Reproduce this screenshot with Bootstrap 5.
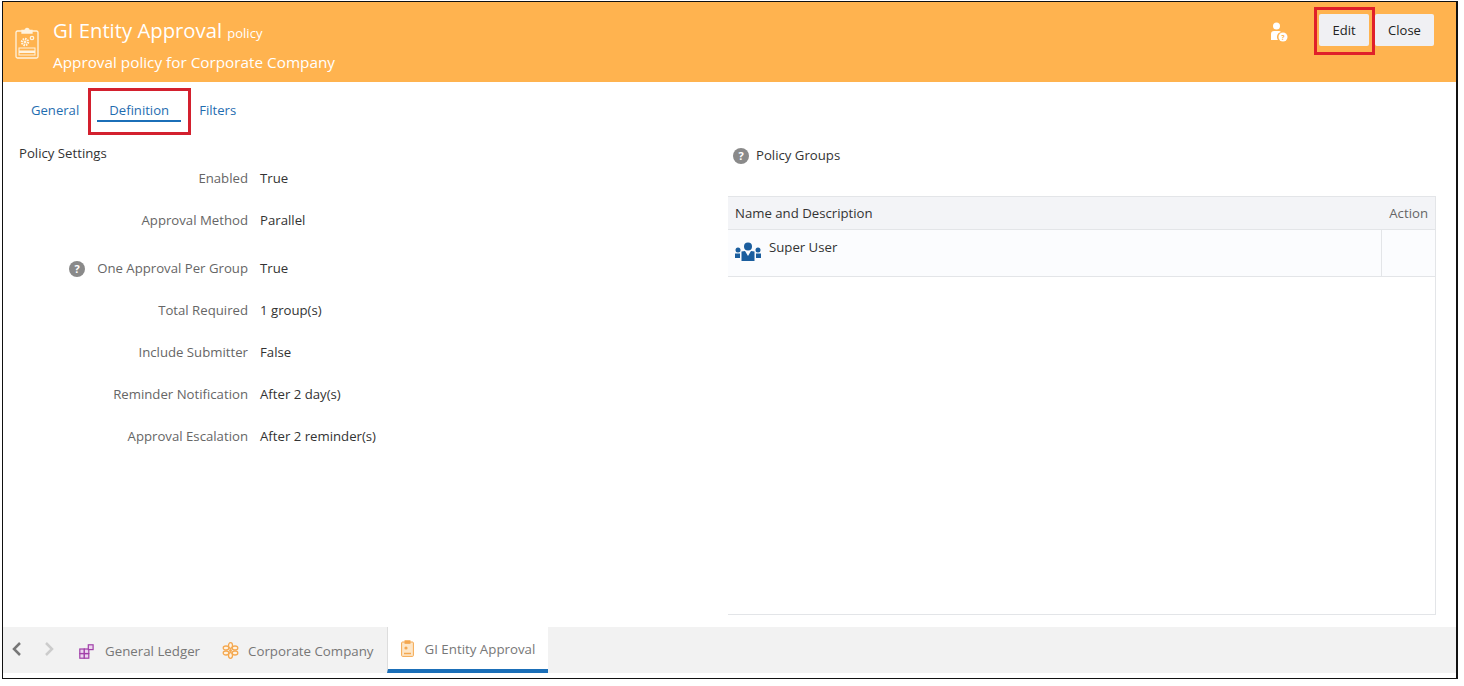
<!DOCTYPE html>
<html lang="en">
<head>
<meta charset="utf-8">
<title>GI Entity Approval policy</title>
<link href="https://cdn.jsdelivr.net/npm/bootstrap@5.3.0/dist/css/bootstrap.min.css" rel="stylesheet">
<style>
html,body{height:686px;overflow:hidden;background:#fff}
body{font-family:"Open Sans","Liberation Sans",sans-serif;font-size:13.2px;color:#333}
.frame{margin:1px 0 0 2px;width:1456px;height:678px;border:1px solid #111;border-right-width:2px}
.hdr{height:80px;background:#ffb34f;color:#fff;padding:0 22px 0 12px}
.hdr-ico{margin-top:24px;margin-right:14px}
.hdr-title{font-size:20.3px;line-height:26px;margin-top:15px}
.hdr-title small{font-size:13px}
.hdr-sub{font-size:15.3px;line-height:20px;margin-top:6px}
.hdr-btns{margin-top:12px}
.hdr-user{margin:8px 31px 0 0}
.btn-hdr{background:#f0f0f3;color:#222;font-size:13px;border:0;border-radius:2px;height:32px;padding:0;width:59px;line-height:32px}
.btn-edit{position:relative;width:50px;margin:0 6px 0 0}
.btn-edit::after{content:"";position:absolute;left:-5px;right:-6px;top:-7px;bottom:-9px;border:3px solid #e0202a}
.tabrow{height:54px;padding:0 0 0 28px}
.tab-lnk{color:#1f6db0;font-size:13.1px;text-decoration:none;line-height:20px;padding:18px 0 0;display:block}
.tab-on{position:relative;margin:0 18px;width:84px;text-align:center;height:40px;border-bottom:2px solid #1b6fb8;padding-top:18px}
.tab-on::after{content:"";position:absolute;left:-9px;right:-10px;top:6px;bottom:-15px;border:3px solid #d3202e}
.colset{height:491px}
.leftcol{width:725px;padding-left:16px}
.ph{line-height:20px;margin-top:7px;color:#333}
.frow{display:flex;align-items:baseline}
.flab{width:229px;text-align:right;color:#666;margin-right:12px;flex:none}
.fval{color:#333}
.r1{margin-top:6px}.r2{margin-top:22px}.r3{margin-top:28px}.r4{margin-top:23px}.r5{margin-top:22px}.r6{margin-top:22px}.r7{margin-top:22px}
.qm{display:inline-block;width:16px;height:16px;border-radius:50%;background:#8a8a8a;color:#fff;font-size:11px;font-weight:700;line-height:16px;text-align:center}
.qm-sp{margin-right:12px}
.qm-pg{margin-right:7px}
.rightcol{width:708px}
.pg{line-height:20px;margin:9px 0 0 5px}
.gridbox{margin-top:31px;height:419px;border:1px solid #e3e5e8;border-left:0;background:#fff}
.ghead{height:33px;background:#f3f4f7;border-bottom:1px solid #e3e5e8;line-height:33px;padding:0 7px;color:#333}
.ghead span+span{color:#666}
.grow{height:47px;background:#fbfcfe;border-bottom:1px solid #e3e5e8}
.gname{padding:8px 0 0 7px}
.gact{width:54px;border-left:1px solid #e3e5e8}
.botbar{height:46px;background:#f2f2f2;padding-left:8px}
.arrow{width:32px;padding-top:12px}
.navit{color:#777;line-height:49px;padding:0;font-size:13.3px}
.navgl{margin-left:4px}
.navgl svg{margin-right:11px}
.navco{margin-left:22px}
.navit svg{vertical-align:-3px}
.navco svg{margin-right:9px}
.navon{background:#fff;border-left:1px solid #ddd;border-bottom:4px solid #1b6fb8;padding:0 13px 0 13px;line-height:45px;margin-left:13px;height:46px}
.navon svg{margin-right:11px}
</style>
</head>
<body>
<div class="frame">
  <div class="hdr d-flex">
    <svg class="hdr-ico" width="24" height="33" viewBox="0 0 24 33" fill="none" stroke="#fff3df" stroke-width="1.300"><path d="M7 5H2.500A1.500 1.500 0 0 0 1 6.500v24A1.500 1.500 0 0 0 2.500 32h19a1.500 1.500 0 0 0 1.500-1.500v-24A1.500 1.500 0 0 0 21.500 5H17"/><path d="M7 7V4.500h3a2 2 0 0 1 4 0h3V7z" fill="#fff3df"/><circle cx="10" cy="16" r="3" stroke-width="2.400" stroke-dasharray="1.500 .8"/><circle cx="10" cy="16" r="1.200" fill="#fff3df" stroke="none"/><circle cx="17" cy="12" r="1.700"/><rect x="4" y="22" width="16" height="7" stroke-width="1"/><rect x="4" y="24.500" width="16" height="2.500" fill="#fff3df" stroke="none"/></svg>
    <div class="flex-grow-1">
      <div class="hdr-title">GI Entity Approval <small>policy</small></div>
      <div class="hdr-sub">Approval policy for Corporate Company</div>
    </div>
    <div class="hdr-btns d-flex align-items-start">
      <svg class="hdr-user" width="18" height="20" viewBox="0 0 18 20"><circle cx="6.500" cy="4" r="3.500" fill="#fff"/><path d="M1 18v-6a3 3 0 0 1 3-3h5a3 3 0 0 1 2 1 5 5 0 0 0-3 8z" fill="#fff"/><circle cx="13" cy="15" r="4.500" fill="#fff"/><text x="13" y="18" font-size="7" font-weight="700" text-anchor="middle" fill="#ffb34f">?</text></svg>
      <button class="btn btn-hdr btn-edit" type="button">Edit</button>
      <button class="btn btn-hdr" type="button">Close</button>
    </div>
  </div>
  <div class="tabrow d-flex">
    <a class="tab-lnk" href="#">General</a>
    <a class="tab-lnk tab-on" href="#">Definition</a>
    <a class="tab-lnk" href="#">Filters</a>
  </div>
  <div class="colset d-flex">
    <div class="leftcol">
      <div class="ph">Policy Settings</div>
      <div class="frow r1"><div class="flab">Enabled</div><div class="fval">True</div></div>
      <div class="frow r2"><div class="flab">Approval Method</div><div class="fval">Parallel</div></div>
      <div class="frow r3"><div class="flab"><span class="qm qm-sp">?</span>One Approval Per Group</div><div class="fval">True</div></div>
      <div class="frow r4"><div class="flab">Total Required</div><div class="fval">1 group(s)</div></div>
      <div class="frow r5"><div class="flab">Include Submitter</div><div class="fval">False</div></div>
      <div class="frow r6"><div class="flab">Reminder Notification</div><div class="fval">After 2 day(s)</div></div>
      <div class="frow r7"><div class="flab">Approval Escalation</div><div class="fval">After 2 reminder(s)</div></div>
    </div>
    <div class="rightcol">
      <div class="pg"><span class="qm qm-pg">?</span>Policy Groups</div>
      <div class="gridbox">
        <div class="ghead d-flex justify-content-between"><span>Name and Description</span><span>Action</span></div>
        <div class="grow d-flex">
          <div class="gname flex-grow-1 d-flex">
            <svg class="me-2 mt-1" width="26" height="20" viewBox="0 0 26 20" fill="#1b5e9e"><circle cx="13" cy="4.500" r="4"/><circle cx="3" cy="8" r="2.500"/><circle cx="23" cy="8" r="2.500"/><path d="M6.500 9.500l3.500-.5 3 5 3-5 3.500.5V19h-13z"/><path d="M0 11.500h5V16H0zM21 11.500h5V16h-5z"/></svg>
            <span>Super User</span>
          </div>
          <div class="gact"></div>
        </div>
      </div>
    </div>
  </div>
  <div class="botbar d-flex">
    <div class="arrow"><svg width="12" height="16" viewBox="0 0 12 16" fill="none" stroke="#777" stroke-width="2.500"><path d="M9 2L3 8l6 6"/></svg></div>
    <div class="arrow"><svg width="12" height="16" viewBox="0 0 12 16" fill="none" stroke="#ccc" stroke-width="2.500"><path d="M3 2l6 6-6 6"/></svg></div>
    <div class="navit navgl"><svg width="15" height="15" viewBox="0 0 15 15" fill="#ecd5ee" stroke="#a13fa8" stroke-width="1.200"><rect x=".8" y="5" width="4.500" height="4.500"/><rect x=".8" y="9.700" width="4.500" height="4.500"/><rect x="5.300" y="9.700" width="4.500" height="4.500"/><rect x="5.300" y="5" width="4.500" height="4.500"/><rect x="9.300" y=".8" width="4.800" height="4.800"/></svg>General Ledger</div>
    <div class="navit navco"><svg width="17" height="17" viewBox="0 0 17 17" fill="#fff3e2" stroke="#f4a850" stroke-width="1.300"><ellipse cx="8.500" cy="3.500" rx="2" ry="2.800"/><ellipse cx="8.500" cy="13.500" rx="2" ry="2.800"/><ellipse cx="4" cy="6" rx="2.800" ry="2"/><ellipse cx="13" cy="6" rx="2.800" ry="2"/><ellipse cx="4" cy="11" rx="2.800" ry="2"/><ellipse cx="13" cy="11" rx="2.800" ry="2"/><circle cx="8.500" cy="8.500" r="1.500" fill="#f4a850" stroke="none"/></svg>Corporate Company</div>
    <div class="navit navon"><svg width="13" height="17" viewBox="0 0 13 17" fill="#fde6c8" stroke="#f4a850"><rect x=".6" y="2" width="11.800" height="14.400" rx="1"/><rect x="4" y=".8" width="5" height="2.500" fill="#f4a850"/><circle cx="5" cy="8" r="1.600" fill="#f4a850" stroke="none"/><path d="M3 13.500h7" fill="none" stroke-width="1.500"/></svg>GI Entity Approval</div>
  </div>
</div>
<script src="https://cdn.jsdelivr.net/npm/bootstrap@5.3.0/dist/js/bootstrap.bundle.min.js"></script>
</body>
</html>
